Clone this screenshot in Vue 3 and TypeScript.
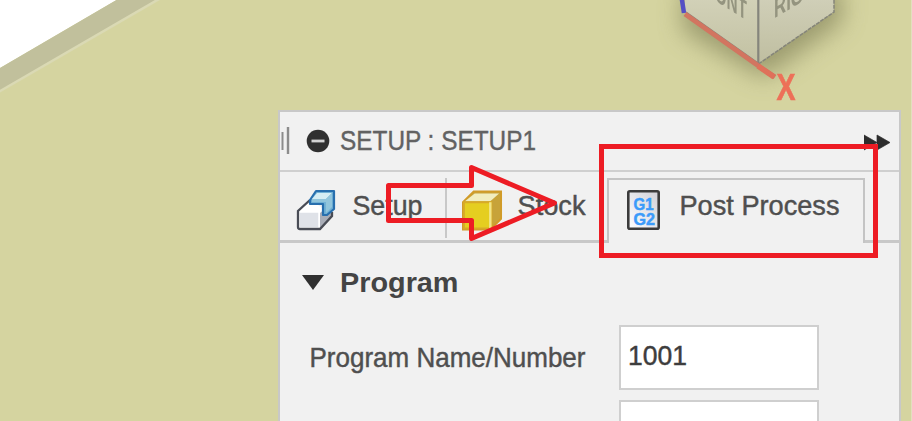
<script setup lang="ts">
import { ref } from 'vue'

const title = ref('SETUP : SETUP1')
const programNumber = ref('1001')
</script>

<template>
  <main class="viewport">
    <svg class="scene" viewBox="0 0 912 421" aria-hidden="true">
      <defs>
        <filter id="shade" x="-30%" y="-30%" width="160%" height="160%">
          <feGaussianBlur stdDeviation="12" />
        </filter>
        <filter id="soft"><feGaussianBlur stdDeviation="0.7" /></filter>
        <linearGradient id="front" x1="0" y1="0" x2="0" y2="1">
          <stop offset="0" stop-color="#d2d1b8" />
          <stop offset="1" stop-color="#c2c1a2" />
        </linearGradient>
        <linearGradient id="right" x1="0" y1="0" x2="0" y2="1">
          <stop offset="0" stop-color="#d0cfb8" />
          <stop offset="1" stop-color="#bfbea0" />
        </linearGradient>
      </defs>
      <rect width="912" height="421" fill="#d5d4a0" />
      <g filter="url(#soft)">
        <path d="M-5 -5H125L-5 71Z" fill="#fff" />
        <path d="M125 -5L-5 71V94L166 -5Z" fill="#c1c09c" />
        <path d="M-5 94L166 -5" stroke="#dad9b4" stroke-width="2.5" />
      </g>
      <path d="M684 -12H842V22L764 78L682 30Z" fill="#85855b" opacity=".72" filter="url(#shade)" />
      <path d="M685 -2V13L758 64V-2Z" fill="url(#front)" />
      <path d="M758 -2V64L834 12V-2Z" fill="url(#right)" />
      <path d="M758.500 64L834 12V-2" fill="none" stroke="#85857a" stroke-width="1.500" stroke-dasharray="4 1" />
      <path d="M758.300 -2V65" stroke="#85857c" stroke-width="2.200" />
      <path d="M686 12L758 63" stroke="#85857a" stroke-width="1.500" />
      <g filter="url(#soft)">
        <text class="cube-label" transform="matrix(.64 .4 0 1.150 694 -12.500)">FRONT</text>
        <text class="cube-label" transform="matrix(.7 -.42 0 1.150 774 18.500)">RIGHT</text>
        <path d="M681.500 -3L684 13" stroke="#5550c5" stroke-width="4.500" />
        <path d="M685 14L760 67L775 77" fill="none" stroke="#d27460" stroke-width="4.800" />
        <path d="M758 66L774 77" stroke="#df715a" stroke-width="5.500" />
        <text class="axis" x="776.500" y="100" textLength="19" lengthAdjust="spacingAndGlyphs">X</text>
      </g>
      <path d="M911.500 0V421" stroke="#e1e0bd" />
    </svg>

    <section class="panel">
      <header class="title-bar">
        <svg class="title-icons" viewBox="0 0 60 56" aria-hidden="true">
          <path d="M2.500 20V38" stroke="#8c8c8c" stroke-width="2" />
          <path d="M8 15V42" stroke="#8c8c8c" stroke-width="2.400" />
          <circle cx="38" cy="29" r="11.300" fill="#303030" />
          <path d="M31.500 29H44.500" stroke="#d3d3d3" stroke-width="2.800" />
        </svg>
        <svg class="title-text"><text class="caption" x="0" y="37.500" textLength="196" lengthAdjust="spacingAndGlyphs">{{ title }}</text></svg>
        <svg class="forward" viewBox="0 0 26 18" aria-hidden="true">
          <path d="M0 1L13 8.500V1L26 8.500L13 16V8.500L0 16Z" fill="#2d2d2d" stroke="#2d2d2d" stroke-width=".7" />
        </svg>
      </header>

      <nav class="tabs">
        <div class="tab setup">
          <svg class="setup-icon" viewBox="0 0 40 42" aria-hidden="true">
            <path d="M2 21L14 9L34 24L24 39H3L2 38Z" fill="#fff" />
            <path d="M24 23L36 13V27L24 39Z" fill="#a9adb7" />
            <path d="M3 22H23V38H3Z" fill="#dfe2e8" stroke="#fff" stroke-width="1.500" />
            <path d="M14 10L2 21V37Q2 39 4 39H24L36 26V22" fill="none" stroke="#494c55" stroke-width="2.300" />
            <path d="M14 10L20 1H38V19L31 25H27V14H14Z" fill="#71b1d5" stroke="#286fae" stroke-width="2.200" stroke-linejoin="round" />
            <path d="M16 9L21 3H36L30 9Z" fill="#d5edf4" />
            <path d="M16 9H30L36 3V17L30 23V12H16Z" fill="#91c5dc" />
          </svg>
          <svg class="setup-text"><text class="label" x="-0.500" y="28" textLength="70" lengthAdjust="spacingAndGlyphs">Setup</text></svg>
        </div>
        <div class="tab stock">
          <svg class="stock-icon" viewBox="0 0 42 42" aria-hidden="true">
            <path d="M1 12L12 1H40V29L29 40H1Z" fill="#c7a33a" stroke="#d19b28" stroke-width="2" />
            <path d="M3 11L13 3H38L29 11Z" fill="#f1edbf" />
            <path d="M2 12H30V39H2Z" fill="#e5ce20" stroke="#d8aa26" stroke-width="2" />
            <path d="M29 12V39" stroke="#f1e58a" stroke-width="2.500" />
          </svg>
          <svg class="stock-text"><text class="label" x="-0.500" y="28" textLength="68" lengthAdjust="spacingAndGlyphs">Stock</text></svg>
        </div>
        <div class="tab active">
          <svg class="code-icon" viewBox="0 0 33 40" aria-hidden="true">
            <defs><linearGradient id="paper" x1="0" y1="1" x2="1" y2="0"><stop stop-color="#fff" /><stop offset="1" stop-color="#cfcfd6" /></linearGradient></defs>
            <rect x="1.300" y="1.300" width="30.400" height="37.400" rx="1.500" fill="url(#paper)" stroke="#3b3b3b" stroke-width="2.600" />
            <text class="code" x="6.500" y="19.800" textLength="20" lengthAdjust="spacingAndGlyphs">G1</text>
            <text class="code" x="6.500" y="35" textLength="21.500" lengthAdjust="spacingAndGlyphs">G2</text>
          </svg>
          <svg class="post-text"><text class="label" x="-1.500" y="28" textLength="160" lengthAdjust="spacingAndGlyphs">Post Process</text></svg>
        </div>
        <div class="tab-rest"></div>
      </nav>

      <div class="content">
        <div class="group-head">
          <svg class="expander" viewBox="0 0 22 15" aria-hidden="true"><path d="M0 0H22L11 15Z" fill="#303030" /></svg>
          <svg class="group-text"><text class="label bold" x="0" y="28" textLength="118.500" lengthAdjust="spacingAndGlyphs">Program</text></svg>
        </div>
        <div class="field-row">
          <svg class="field-text"><text class="label" x="-0.500" y="28" textLength="276" lengthAdjust="spacingAndGlyphs">Program Name/Number</text></svg>
          <div class="field">
            <svg class="value-text"><text class="label value" x="0" y="28" textLength="59" lengthAdjust="spacingAndGlyphs">{{ programNumber }}</text></svg>
          </div>
        </div>
        <div class="field next"></div>
      </div>
    </section>

    <svg class="annotations" viewBox="0 0 912 421" aria-hidden="true">
      <path d="M388.500 185.500H471.500V167.500L554.500 203L471.500 238.500V220.500H388.500Z" />
      <rect x="601.500" y="146.500" width="274" height="109" />
    </svg>
  </main>
</template>

<style>
body { margin: 0; overflow: hidden; }
</style>

<style scoped>
.viewport {
  position: relative;
  box-sizing: border-box;
  width: 912px;
  height: 421px;
  padding: 110px 11px 0 278px;
  overflow: hidden;
  font-family: "Liberation Sans", Arial, sans-serif;
}
.viewport svg { display: block; flex: none; }
.scene, .annotations { position: absolute; top: 0; left: 0; width: 912px; height: 421px; }
.annotations { fill: none; stroke: #ed1c24; stroke-width: 5; stroke-linejoin: round; pointer-events: none; }
.annotations rect { stroke-linejoin: miter; }
.cube-label { font-size: 24px; font-weight: bold; fill: #94947f; }
.axis { font-size: 36px; font-weight: bold; fill: #ed7059; stroke: #ed7059; stroke-width: .6; }
.panel {
  position: relative;
  box-sizing: border-box;
  width: 623px;
  height: 330px;
  border: 2px solid #c8c8c8;
  border-bottom: 0;
  background: #f1f1f1;
}
.title-bar { display: flex; height: 58px; border-bottom: 2px solid #cfcfcf; }
.title-icons { width: 60px; height: 56px; }
.title-text { width: 196px; height: 56px; overflow: visible; }
.forward { width: 26px; height: 18px; margin: 22px 9px 0 auto; }
.caption { font-size: 28.500px; fill: #626262; stroke: #626262; stroke-width: .4; }
.label { font-size: 28.500px; fill: #4f4f4f; stroke: #4f4f4f; stroke-width: .45; }
.bold { font-size: 28px; font-weight: bold; fill: #444; stroke: none; }
.value { fill: #3d3d3d; stroke: #3d3d3d; }
.code { font-size: 16px; font-weight: bold; fill: #3b9bfa; stroke: #3b9bfa; stroke-width: .5; }
.tabs { display: flex; height: 71px; }
.tab { display: flex; box-sizing: border-box; height: 71px; border-bottom: 3px solid #c8c8c8; }
.tab svg { overflow: visible; }
.setup { width: 167px; padding-left: 16px; background: linear-gradient(#c8c8c8, #c8c8c8) right 6px / 2px 60px no-repeat; }
.setup-icon { width: 40px; height: 42px; margin-top: 18px; }
.setup-text { width: 70px; height: 36px; margin: 15px 0 0 17px; }
.stock { width: 160px; padding-left: 15px; }
.stock-icon { width: 41px; height: 42px; margin-top: 18px; }
.stock-text { width: 68px; height: 36px; margin: 15px 0 0 15px; }
.active { width: 258px; height: 65px; margin-top: 6px; padding-left: 18px; border: 2px solid #c4c4c4; border-bottom: 0; }
.code-icon { width: 33px; height: 40px; margin-top: 10px; }
.post-text { width: 160px; height: 36px; margin: 7px 0 0 21px; }
.tab-rest { flex: 1; height: 68px; border-bottom: 3px solid #c8c8c8; }
.content { padding-top: 21px; }
.group-head { display: flex; height: 42px; }
.expander { width: 22px; height: 15px; margin: 11px 16px 0 22px; }
.group-text { width: 120px; height: 42px; overflow: visible; }
.field-row { display: flex; height: 65px; margin-top: 19px; padding-left: 30px; }
.field-text { width: 277px; height: 42px; margin-top: 14px; overflow: visible; }
.field { box-sizing: border-box; width: 200px; height: 65px; margin-left: 32px; border: 2px solid #cfcfcf; background: #fff; }
.value-text { width: 60px; height: 36px; margin: 10px 0 0 7px; overflow: visible; }
.next { margin: 10px 0 0 339px; }
</style>
